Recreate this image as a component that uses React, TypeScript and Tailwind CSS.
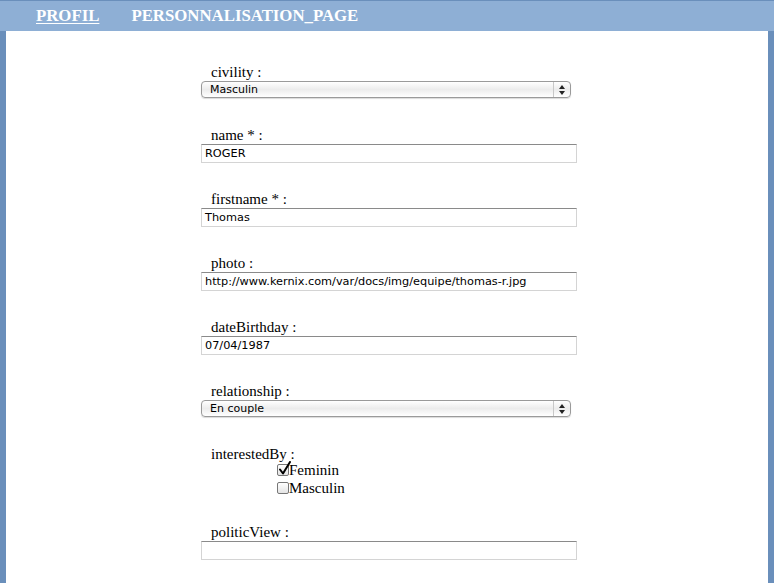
import React from "react";

const serif = { fontFamily: '"Liberation Serif", "Times New Roman", serif' };

function Label({ children }: { children: React.ReactNode }) {
  return (
    <div className="pl-[10px] h-[17px] leading-[17px] text-[15px] text-black" style={serif}>
      {children}
    </div>
  );
}

function Select({ value }: { value: string }) {
  return (
    <div className="relative flex items-center w-[370px] h-[17px] rounded-[4px] border border-[#9a9a9a] bg-gradient-to-b from-white via-[#ececec] to-white shadow-[0_1px_1px_rgba(0,0,0,0.15)]">
      <span className="pl-[8px] text-[11px] leading-none text-black font-['DejaVu_Sans',sans-serif]">{value}</span>
      <div className="ml-auto h-full w-[17px] border-l border-[#c8c8c8] flex flex-col items-center justify-center gap-[2px]">
        <svg width="6" height="4" viewBox="0 0 6 4"><path d="M3 0L6 4H0z" fill="#222" /></svg>
        <svg width="6" height="4" viewBox="0 0 6 4"><path d="M0 0H6L3 4z" fill="#222" /></svg>
      </div>
    </div>
  );
}

function Input({ value }: { value: string }) {
  return (
    <div className="w-[376px] h-[19px] border border-[#d4d4d4] border-t-[#8a8a8a] bg-white flex items-center px-[3px] text-[11.3px] leading-none text-black font-['DejaVu_Sans',sans-serif]">
      {value}
    </div>
  );
}

function Checkbox({ checked, label }: { checked?: boolean; label: string }) {
  return (
    <div className="flex items-center h-[18px]">
      <div className="relative w-[12px] h-[12px] rounded-[2px] border border-[#777] bg-gradient-to-b from-white to-[#e4e4e4]">
        {checked && (
          <svg className="absolute left-[0px] top-[-4px]" width="14" height="15" viewBox="0 0 14 15">
            <path d="M2 8.5L5 12.5L12 1" stroke="#000" strokeWidth="2" fill="none" strokeLinecap="round" strokeLinejoin="round" />
          </svg>
        )}
      </div>
      <span className="text-[15px] leading-none text-black" style={serif}>{label}</span>
    </div>
  );
}

export default function App() {
  return (
    <div className="w-[774px] h-[583px] bg-[#6a8fbb] px-[6px] pt-px flex flex-col overflow-hidden">
      {/* top bar */}
      <div className="h-[30px] -mx-[6px] bg-[#8eafd5] flex items-center gap-[32px] pl-[36px] text-white font-bold text-[16.8px]" style={serif}>
        <span className="underline underline-offset-2">PROFIL</span>
        <span>PERSONNALISATION_PAGE</span>
      </div>

      <div className="flex-1 bg-white pl-[195px] pt-[33px]">
        <div className="flex flex-col">
          <Label>civility :</Label>
          <Select value="Masculin" />

          <div className="mt-[29px]"><Label>name * :</Label></div>
          <Input value="ROGER" />

          <div className="mt-[28px]"><Label>firstname * :</Label></div>
          <Input value="Thomas" />

          <div className="mt-[28px]"><Label>photo :</Label></div>
          <Input value="http://www.kernix.com/var/docs/img/equipe/thomas-r.jpg" />

          <div className="mt-[28px]"><Label>dateBirthday :</Label></div>
          <Input value="07/04/1987" />

          <div className="mt-[28px]"><Label>relationship :</Label></div>
          <Select value="En couple" />

          <div className="mt-[29px]"><Label>interestedBy :</Label></div>
          <div className="pl-[76px] -mt-[2px] flex flex-col">
            <Checkbox checked label="Feminin" />
            <Checkbox label="Masculin" />
          </div>

          <div className="mt-[27px]"><Label>politicView :</Label></div>
          <Input value="" />
        </div>
      </div>
    </div>
  );
}
